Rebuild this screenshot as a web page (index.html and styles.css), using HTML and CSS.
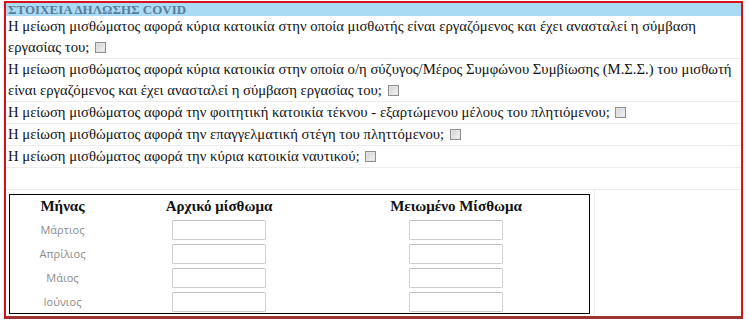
FILE: index.html
```
<!DOCTYPE html>
<html lang="el">
<head>
    <meta charset="UTF-8">
    <title>Στοιχεία δήλωσης COVID</title>
    <link rel="stylesheet" href="styles.css">
</head>
<body>
    <div class="covidBox">
        <table class="covidTable">
            <tr><td class="covidTitle" colspan="2">ΣΤΟΙΧΕΙΑ ΔΗΛΩΣΗΣ COVID</td></tr>
            <tr><td colspan="2">Η μείωση μισθώματος αφορά κύρια κατοικία στην οποία μισθωτής είναι εργαζόμενος και έχει ανασταλεί η σύμβαση εργασίας του; <span class="chk"></span></td></tr>
            <tr><td colspan="2">Η μείωση μισθώματος αφορά κύρια κατοικία στην οποία ο/η σύζυγος/Μέρος Συμφώνου Συμβίωσης (Μ.Σ.Σ.) του μισθωτή είναι εργαζόμενος και έχει ανασταλεί η σύμβαση εργασίας του; <span class="chk"></span></td></tr>
            <tr><td colspan="2">Η μείωση μισθώματος αφορά την φοιτητική κατοικία τέκνου - εξαρτώμενου μέλους του πλητιόμενου; <span class="chk"></span></td></tr>
            <tr><td colspan="2">Η μείωση μισθώματος αφορά την επαγγελματική στέγη του πληττόμενου; <span class="chk"></span></td></tr>
            <tr><td colspan="2">Η μείωση μισθώματος αφορά την κύρια κατοικία ναυτικού; <span class="chk"></span></td></tr>
            <tr><td class="emptyRow" colspan="2"></td></tr>
            <tr>
                <td class="monthCell">
                    <table class="monthTable">
                        <tr>
                            <th class="colMonth">Μήνας</th>
                            <th class="colStart">Αρχικό μίσθωμα</th>
                            <th class="colLow">Μειωμένο Μίσθωμα</th>
                        </tr>
                        <tr><td class="month">Μάρτιος</td><td><input type="text"></td><td><input type="text"></td></tr>
                        <tr><td class="month">Απρίλιος</td><td><input type="text"></td><td><input type="text"></td></tr>
                        <tr><td class="month">Μάιος</td><td><input type="text"></td><td><input type="text"></td></tr>
                        <tr><td class="month">Ιούνιος</td><td><input type="text"></td><td><input type="text"></td></tr>
                    </table>
                </td>
                <td class="restCell"></td>
            </tr>
        </table>
    </div>
</body>
</html>
```

FILE: styles.css
```
body{margin: 0; background: #fff; font-family: "Liberation Serif", "Times New Roman", serif;}
.covidBox{width: 735px; margin: 1px 0 0 4px; border: 2px solid #d3141d; border-bottom: 3px solid #9e3330; box-shadow: 0 1px 1px #d8b8b6;}
.covidTable{width: 100%; border-collapse: collapse;}
.covidTable > tbody > tr > td{padding: 0 2px; font-family: "Liberation Serif", "Times New Roman", serif; font-size: 14.7px; line-height: 21px; color: #111; border-bottom: 1px solid #ececec; vertical-align: top;}
.covidTable > tbody > tr > td.covidTitle{background: #aadbf5; color: #5a7b98; font-weight: bold; font-size: 13px; line-height: 13px; padding: 0 2px; border-bottom: 0;}
.covidTable > tbody > tr > td.emptyRow{height: 21px;}
.covidTable > tbody > tr > td.monthCell{width: 583px; padding: 4px 2px 2px 3px; border-right: 1px solid #ececec; border-bottom: 0;}
.covidTable > tbody > tr > td.restCell{border-bottom: 0;}
.chk{display: inline-block; width: 9px; height: 9px; margin-left: 2px; border: 1px solid #8e8f8f; background: linear-gradient(135deg, #d0d0d0, #f4f4f4); box-shadow: inset 0 0 0 1px #e4e4e4; vertical-align: -1px;}
.monthTable{width: 581px; border: 1px solid #000; border-collapse: collapse;}
.monthTable th{font-size: 15px; font-weight: bold; color: #111; height: 22px; padding: 0; text-align: center;}
.colMonth{width: 105px;}
.colStart{width: 208px;}
.monthTable td{height: 24px; padding: 0; text-align: center;}
.month{font-family: "Open Sans", "Liberation Sans", sans-serif; font-size: 11px; color: #8a8a8a;}
.monthTable input{width: 90px; height: 16px; margin: 0; padding: 1px; border: 1px solid #cfcfcf; border-top-color: #bdbdbd; border-radius: 2px; vertical-align: middle;}
```
